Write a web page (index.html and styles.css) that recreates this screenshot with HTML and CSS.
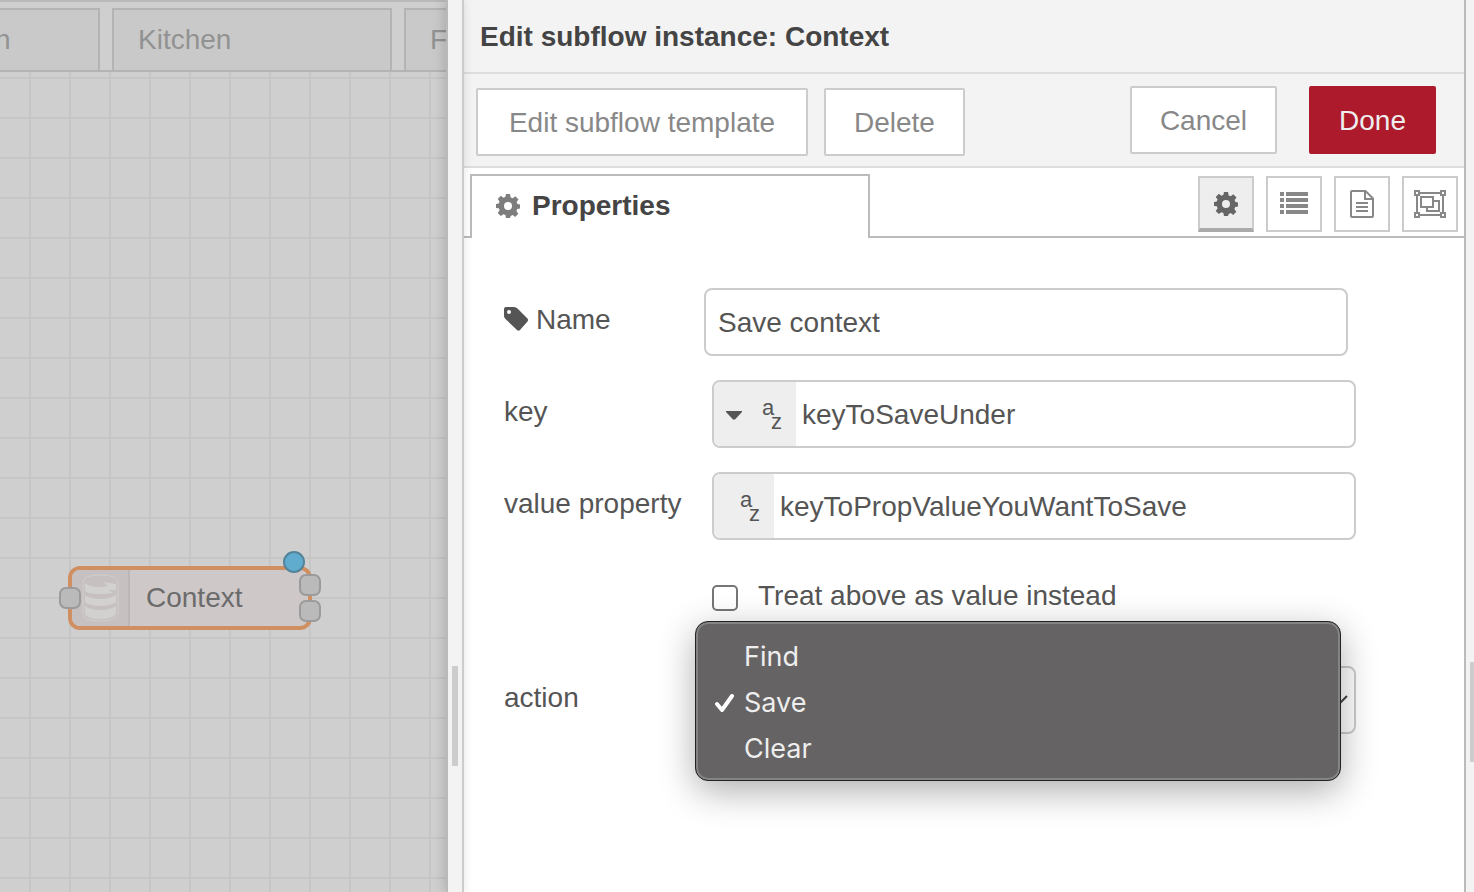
FILE: index.html
```html
<!DOCTYPE html>
<html lang="en">
<head>
<meta charset="utf-8">
<title>Edit subflow instance</title>
<link rel="stylesheet" href="styles.css">
</head>
<body>
<svg class="defs" aria-hidden="true">
  <symbol id="gear" viewBox="0 0 24 24">
    <path fill="currentColor" fill-rule="evenodd" d="M10 0h4l.7 3.400 2 .9 2.600-2 3.200 3.200-1.900 2.600.9 2 2.500.4v4l-2.800.6-.8 2 1.900 2.700-3.100 3.100-2.500-1.900-2 .9L14 24h-4l-.6-2.900-2-.9-2.600 1.900-3.100-3.100 1.900-2.700-.8-2L0 14v-4l2.700-.5.9-2-1.900-2.600 3.100-3.100 2.600 1.900 2-.9zM12 8a4 4 0 1 0 0 8 4 4 0 0 0 0-8z"/>
  </symbol>
</svg>

<main class="workspace">
  <nav class="flow-tabs">
    <button class="flow-tab flow-tab-first" type="button">n</button>
    <button class="flow-tab" type="button">Kitchen</button>
    <button class="flow-tab flow-tab-last" type="button">F</button>
  </nav>
  <div class="canvas">
    <div class="node">
      <span class="node-icon">
        <svg width="38" height="48" viewBox="0 0 38 48" aria-hidden="true">
          <path d="M2 8Q2 1 19 1t18 7v32q0 7-18 7T2 40z" fill="none" stroke="#d3cece"/>
          <path d="M4 9q4 4 15 4 5 0 8-1l-5-4 13 2v6l-7 0 4 3q-5 1-13 1Q7 20 4 17zM4 21q5 4 15 4t16-4v7q-5 4-16 4T4 28zM4 32q5 4 15 4t16-4v8q-3 5-16 5T4 40z" fill="#d3d0d0"/>
        </svg>
      </span>
      <span class="node-label">Context</span>
      <i class="port port-in"></i>
      <i class="port port-out-a"></i>
      <i class="port port-out-b"></i>
      <i class="changed"></i>
    </div>
  </div>
</main>

<div class="splitter"><span class="grip"></span></div>

<section class="tray">
  <header class="tray-title">Edit subflow instance: Context</header>
  <div class="toolbar">
    <div class="group">
      <button class="btn btn-wide" type="button">Edit subflow template</button>
      <button class="btn" type="button">Delete</button>
    </div>
    <div class="group group-end">
      <button class="btn" type="button">Cancel</button>
      <button class="btn btn-primary" type="button">Done</button>
    </div>
  </div>
  <div class="tabs">
    <button class="tab" type="button"><svg width="24" height="24" aria-hidden="true"><use href="#gear"/></svg>Properties</button>
    <div class="icon-tabs">
      <button class="icon-tab selected" type="button" aria-label="Properties"><svg width="24" height="24" aria-hidden="true"><use href="#gear"/></svg></button>
      <button class="icon-tab" type="button" aria-label="Environment">
        <svg width="28" height="24" viewBox="0 0 28 24" fill="currentColor" aria-hidden="true"><path d="M0 0h4v4H0zM6 0h22v4H6zM0 6h4v4H0zM6 6h22v4H6zM0 12h4v4H0zM6 12h22v4H6zM0 18h4v4H0zM6 18h22v4H6z"/></svg>
      </button>
      <button class="icon-tab" type="button" aria-label="Description">
        <svg width="24" height="28" viewBox="0 0 24 28" fill="none" stroke="currentColor" stroke-width="2" aria-hidden="true"><path d="M1 2q0-1 1-1h13.500l7.500 7.500V26q0 1-1 1H2q-1 0-1-1zM15 1v8h8M6 13h12M6 17h12M6 21h12"/></svg>
      </button>
      <button class="icon-tab" type="button" aria-label="Appearance">
        <svg width="32" height="28" viewBox="0 0 32 28" fill="none" stroke="currentColor" stroke-width="2" aria-hidden="true"><path d="M6 3h20M6 25h20M3 6v16M29 6v16M1 1h4v4H1zM27 1h4v4h-4zM1 23h4v4H1zM27 23h4v4h-4zM7 7h12v10H7zM19 11h6v10H13v-4"/></svg>
      </button>
    </div>
  </div>

  <form class="form">
    <div class="row">
      <label class="label label-name" for="name"><svg width="24" height="24" viewBox="0 0 24 24" aria-hidden="true"><path fill="currentColor" fill-rule="evenodd" d="M0 2Q0 0 2 0h8q2 0 3.500 1.500l10 10q1 1.500 0 3L16 23q-1.500 1.500-3 0L1.500 12Q0 10.500 0 9zM5 3a2 2 0 1 0 0 4 2 2 0 0 0 0-4z"/></svg>Name</label>
      <input class="field field-name" id="name" type="text" value="Save context">
    </div>
    <div class="row">
      <label class="label" for="key">key</label>
      <div class="field typed">
        <button class="type type-menu" type="button" aria-label="String type">
          <svg class="caret" width="16" height="9" viewBox="0 0 16 9" aria-hidden="true"><path fill="currentColor" d="M0 0h16v1L9 8.500H7L0 1z"/></svg>
          <span class="az"><span>a</span><span class="z">z</span></span>
        </button>
        <input class="typed-input" id="key" type="text" value="keyToSaveUnder">
      </div>
    </div>
    <div class="row">
      <label class="label" for="value">value property</label>
      <div class="field typed">
        <button class="type" type="button" aria-label="String type">
          <span class="az"><span>a</span><span class="z">z</span></span>
        </button>
        <input class="typed-input" id="value" type="text" value="keyToPropValueYouWantToSave">
      </div>
    </div>
    <div class="row row-check">
      <input class="check" id="literal" type="checkbox">
      <label for="literal">Treat above as value instead</label>
    </div>
    <div class="row">
      <label class="label" for="action">action</label>
      <div class="select-wrap">
        <select class="field select" id="action">
          <option>Find</option>
          <option selected>Save</option>
          <option>Clear</option>
        </select>
        <svg class="chevron" width="24" height="14" viewBox="0 0 24 14" fill="none" stroke="#444" stroke-width="2" aria-hidden="true"><path d="M1 1l11 11L23 1"/></svg>
        <ul class="menu">
          <li class="option">Find</li>
          <li class="option"><svg class="tick" width="20" height="20" viewBox="0 0 20 20" fill="none" stroke="#fff" stroke-width="4" stroke-linecap="round" stroke-linejoin="round" aria-hidden="true"><path d="M2 11l5 6L17 3"/></svg>Save</li>
          <li class="option">Clear</li>
        </ul>
      </div>
    </div>
  </form>
</section>

<aside class="gutter"><span class="grip"></span></aside>
</body>
</html>
```

FILE: styles.css
```css
* { box-sizing: border-box; }

body {
  margin: 0;
  min-height: 100vh;
  display: flex;
  overflow: hidden;
  background: #f3f3f3;
  color: #555;
  font: 28px/34px "Liberation Sans", Arial, sans-serif;
}

button, input, select { font: inherit; color: inherit; margin: 0; }
.defs { position: absolute; width: 0; height: 0; }

/* workspace */
.workspace {
  flex: 0 0 446px;
  display: flex;
  flex-direction: column;
  overflow: hidden;
  background: #cfcfcf;
}
.flow-tabs {
  display: flex;
  gap: 12px;
  padding-top: 6px;
  border-top: 2px solid #b9b9b9;
  border-bottom: 2px solid #b4b4b4;
}
.flow-tab {
  flex: 0 0 280px;
  height: 62px;
  padding: 0 24px;
  border: 2px solid #b4b4b4;
  border-bottom: 0;
  background: #c9c9c9;
  color: #929292;
  text-align: left;
}
.flow-tab-first { flex-basis: 100px; padding: 0; border-left: 0; text-indent: -5px; }
.canvas {
  flex: 1;
  position: relative;
  background-image:
    linear-gradient(90deg, #c6c6c6 2px, transparent 2px),
    linear-gradient(#c6c6c6 2px, transparent 2px);
  background-size: 40px 40px;
  background-position: 29px 5px;
}
.node {
  position: absolute;
  left: 68px;
  top: 494px;
  width: 244px;
  height: 64px;
  display: flex;
  border: 4px solid #d08f60;
  border-radius: 12px;
  background: #cec8c8;
  color: #6b6b6b;
}
.node-icon {
  width: 58px;
  display: flex;
  align-items: center;
  justify-content: center;
  border-right: 2px solid #bcb6b6;
  border-radius: 8px 0 0 8px;
  background: #c6c0c0;
}
.node-label { padding: 11px 16px; }
.port {
  position: absolute;
  width: 22px;
  height: 22px;
  border: 2px solid #9b9b9b;
  border-radius: 7px;
  background: #bababa;
}
.port-in { left: -13px; top: 17px; }
.port-out-a { left: 227px; top: 4px; }
.port-out-b { left: 227px; top: 30px; }
.changed {
  position: absolute;
  left: 211px;
  top: -19px;
  width: 22px;
  height: 22px;
  border: 2px solid #54839a;
  border-radius: 50%;
  background: #5faccf;
}

/* separators */
.splitter {
  flex: 0 0 18px;
  display: flex;
  align-items: flex-end;
  justify-content: center;
  position: relative;
  border-left: 2px solid #b9b9b9;
  border-right: 2px solid #ccc;
  background: #f3f3f3;
  box-shadow: -2px 0 12px rgba(0, 0, 0, .16);
  clip-path: inset(0 -10px 0 -20px);
}
.grip { width: 6px; height: 100px; margin-bottom: 126px; background: #ccc; }
.gutter {
  flex: 0 0 10px;
  display: flex;
  align-items: flex-end;
  justify-content: flex-end;
  border-left: 2px solid #bbb;
  padding-bottom: 4px;
}
.gutter .grip { width: 4px; }

/* tray */
.tray { flex: 1; min-width: 0; background: #fff; }
.tray-title {
  padding: 20px 16px 18px;
  border-bottom: 2px solid #ddd;
  background: #f3f3f3;
  color: #444;
  font-weight: bold;
}
.toolbar {
  display: flex;
  justify-content: space-between;
  padding: 12px 28px 10px 12px;
  border-bottom: 2px solid #ddd;
  background: #f3f3f3;
}
.group { display: flex; gap: 16px; padding-top: 2px; }
.group-end { gap: 32px; padding: 0 0 2px; }
.btn {
  height: 68px;
  padding: 2px 28px 0;
  border: 2px solid #ccc;
  border-radius: 2px;
  background: #fff;
  color: #888;
}
.btn-wide { min-width: 332px; }
.btn-primary { border-color: #ad1a2b; background: #ad1a2b; color: #eee; }

.tabs {
  display: flex;
  justify-content: space-between;
  padding: 6px 6px 0;
  box-shadow: inset 0 -2px #bbb;
}
.tab {
  width: 400px;
  height: 64px;
  display: flex;
  align-items: center;
  gap: 12px;
  padding: 0 24px 2px;
  border: 2px solid #bbb;
  border-bottom: 0;
  background: #fff;
  color: #444;
  font-weight: bold;
}
.tab svg { color: #7d7d7d; }
.icon-tabs { display: flex; gap: 12px; padding-top: 2px; }
.icon-tab {
  width: 56px;
  height: 56px;
  display: flex;
  align-items: center;
  justify-content: center;
  padding: 0;
  border: 2px solid #ccc;
  background: #fff;
  color: #888;
}
.icon-tab svg { flex: none; }
.icon-tab.selected { padding-top: 2px; border-bottom: 4px solid #aaa; background: #eee; color: #666; }

/* form */
.form {
  display: flex;
  flex-direction: column;
  gap: 24px;
  padding: 50px 108px 0 40px;
}
.row { display: flex; align-items: center; }
.label { flex: 0 0 208px; padding-bottom: 4px; white-space: nowrap; }
.label-name { flex-basis: 200px; display: flex; align-items: center; gap: 8px; }
.label-name svg { margin-bottom: 2px; }
.field {
  flex: 1;
  min-width: 0;
  height: 68px;
  border: 2px solid #ccc;
  border-radius: 8px;
  background: #fff;
}
.field-name { margin-right: 8px; padding: 2px 12px 0; }
.typed { display: flex; overflow: hidden; }
.type {
  flex: none;
  width: 60px;
  display: flex;
  align-items: center;
  justify-content: flex-end;
  padding: 0 14px 0 0;
  border: 0;
  background: #eee;
}
.type-menu { width: 82px; justify-content: space-between; padding-left: 12px; }
.caret { margin-top: 2px; }
.az { width: 20px; display: grid; font-size: 22px; line-height: 14px; text-align: left; padding-top: 2px; }
.z { padding-left: 9px; }
.typed-input { flex: 1; min-width: 0; padding: 2px 6px 0; border: 0; background: none; }
.row-check { gap: 20px; padding: 15px 0 29px 208px; }
.check {
  appearance: none;
  width: 26px;
  height: 26px;
  margin-top: 4px;
  border: 2px solid #767676;
  border-radius: 5px;
  background: #fff;
}
.select-wrap { flex: 1; position: relative; }
.select { appearance: none; display: block; width: 100%; padding: 0 12px; }
.chevron { position: absolute; right: 8px; top: 29px; }
.menu {
  position: absolute;
  left: -17px;
  right: 15px;
  top: -45px;
  margin: 0;
  padding: 12px 0 8px;
  border: 1px solid #222;
  border-radius: 13px;
  background: #656363;
  box-shadow: inset 0 0 0 2px #858484, 0 10px 36px rgba(0, 0, 0, .32);
  color: #eee;
  font-family: Inter, Roboto, sans-serif;
  font-size: 27px;
  list-style: none;
}
.option { position: relative; padding: 6px 48px; }
.tick { position: absolute; left: 19px; top: 13px; }
```
